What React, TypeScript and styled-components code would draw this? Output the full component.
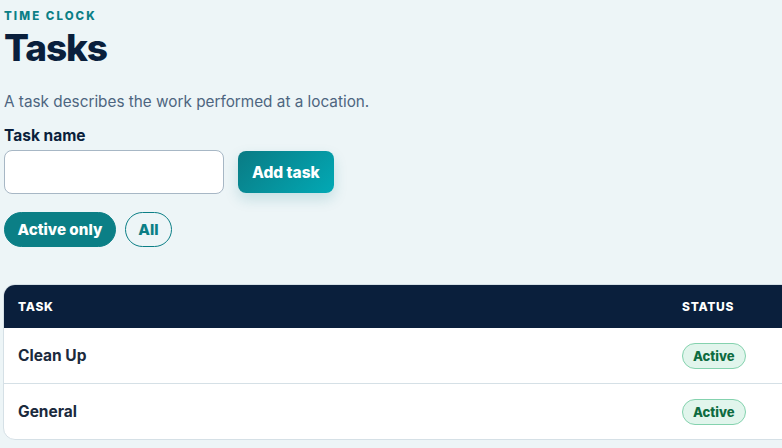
import React from 'react'
import styled, { createGlobalStyle } from 'styled-components'

const GlobalStyle = createGlobalStyle`
  html, body {
    margin: 0;
    padding: 0;
    background: #edf5f7;
    overflow: hidden;
  }
  body {
    font-family: Inter, 'Noto Sans', Arial, sans-serif;
    color: #0a1f3c;
  }
`

const Page = styled.div`
  padding: 8px 4px 0 3px;
  width: 900px;
`

const Eyebrow = styled.div`
  font-size: 11.5px;
  font-weight: 800;
  letter-spacing: 0.18em;
  text-transform: uppercase;
  color: #0b7f86;
  line-height: 16px;
  padding-left: 1px;
`

const Title = styled.h1`
  margin: 1px 0 0;
  font-size: 37px;
  font-weight: 800;
  letter-spacing: -0.03em;
  line-height: 46px;
  color: #0a1f3c;
  padding-left: 1px;
`

const Lead = styled.p`
  margin: 21px 0 0;
  font-size: 15.3px;
  line-height: 20px;
  color: #4d6580;
  padding-left: 1px;
`

const Label = styled.label`
  display: block;
  margin-top: 14px;
  font-size: 15.5px;
  font-weight: 700;
  line-height: 20px;
  color: #0a1f3c;
  padding-left: 1px;
`

const FormRow = styled.div`
  display: flex;
  align-items: center;
  gap: 14px;
  margin-top: 4px;
  padding-left: 1px;
`

const TextInput = styled.input`
  box-sizing: border-box;
  width: 220px;
  height: 44px;
  border: 1px solid #a7b7c5;
  border-radius: 8px;
  background: #fff;
  padding: 0 12px;
  font: inherit;
  font-size: 15px;
`

const PrimaryButton = styled.button`
  height: 42px;
  padding: 0 14px;
  border: none;
  border-radius: 8px;
  background: linear-gradient(135deg, #0a7b84 0%, #02a9b5 100%);
  color: #fff;
  font: inherit;
  font-size: 15.5px;
  font-weight: 800;
  box-shadow: 0 6px 14px rgba(10, 123, 132, 0.18);
  cursor: pointer;
`

const FilterRow = styled.div`
  display: flex;
  gap: 9px;
  margin-top: 18px;
  padding-left: 1px;
`

const Pill = styled.button<{ $active?: boolean }>`
  box-sizing: border-box;
  height: 35px;
  padding: 0 12.5px;
  border-radius: 999px;
  border: 1px solid #0b7f86;
  background: ${({ $active }) => ($active ? '#0b7f86' : 'transparent')};
  color: ${({ $active }) => ($active ? '#fff' : '#0b7f86')};
  font: inherit;
  font-size: 15.2px;
  font-weight: 800;
  cursor: pointer;
`

const TableCard = styled.div`
  margin-top: 37px;
  border: 1px solid #d5e0e6;
  border-radius: 12px;
  overflow: hidden;
  background: #fff;
`

const Table = styled.table`
  width: 100%;
  border-collapse: collapse;
`

const Th = styled.th<{ $w?: string }>`
  background: #0a1f3c;
  color: #fff;
  text-align: left;
  font-size: 12px;
  font-weight: 800;
  letter-spacing: 0.06em;
  text-transform: uppercase;
  height: 43px;
  padding: 0 14px;
  width: ${({ $w }) => $w || 'auto'};
`

const Td = styled.td`
  height: 55px;
  padding: 0 14px;
  font-size: 15.5px;
  font-weight: 700;
  color: #1b2a3d;
  border-top: 1px solid #d5e0e6;
`

const Row = styled.tr`
  &:first-child td {
    border-top: none;
  }
`

const Badge = styled.span`
  display: inline-block;
  padding: 4px 10px;
  border-radius: 999px;
  border: 1px solid #84d2ae;
  background: #e1f5ec;
  color: #0d6b40;
  font-size: 13px;
  font-weight: 800;
  line-height: 16px;
`

const tasks = [
  { name: 'Clean Up', status: 'Active' },
  { name: 'General', status: 'Active' },
]

export default function App() {
  return (
    <>
      <GlobalStyle />
      <Page>
        <Eyebrow>Time Clock</Eyebrow>
        <Title>Tasks</Title>
        <Lead>A task describes the work performed at a location.</Lead>
        <Label htmlFor="task-name">Task name</Label>
        <FormRow>
          <TextInput id="task-name" />
          <PrimaryButton>Add task</PrimaryButton>
        </FormRow>
        <FilterRow>
          <Pill $active>Active only</Pill>
          <Pill>All</Pill>
        </FilterRow>
        <TableCard>
          <Table>
            <thead>
              <tr>
                <Th>Task</Th>
                <Th $w="206px">Status</Th>
              </tr>
            </thead>
            <tbody>
              {tasks.map(t => (
                <Row key={t.name}>
                  <Td>{t.name}</Td>
                  <Td>
                    <Badge>{t.status}</Badge>
                  </Td>
                </Row>
              ))}
            </tbody>
          </Table>
        </TableCard>
      </Page>
    </>
  )
}
